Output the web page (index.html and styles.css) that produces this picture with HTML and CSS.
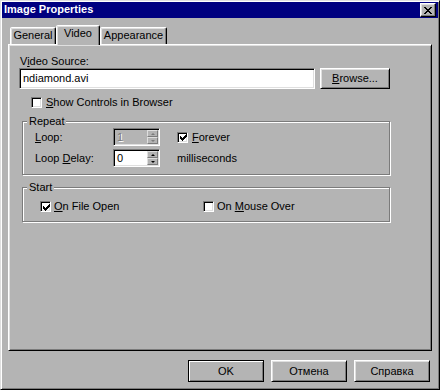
FILE: index.html
```html
<!DOCTYPE html>
<html>
<head>
<meta charset="utf-8">
<title>Image Properties</title>
<link rel="stylesheet" href="styles.css">
</head>
<body>
<div class="window">
  <div class="titlebar">
    <span class="title">Image Properties</span>
    <span class="close">
      <svg width="8" height="7" viewBox="0 0 8 7" shape-rendering="crispEdges">
        <rect x="0" y="0" width="2" height="1"/><rect x="6" y="0" width="2" height="1"/>
        <rect x="1" y="1" width="2" height="1"/><rect x="5" y="1" width="2" height="1"/>
        <rect x="2" y="2" width="4" height="1"/>
        <rect x="3" y="3" width="2" height="1"/>
        <rect x="2" y="4" width="4" height="1"/>
        <rect x="1" y="5" width="2" height="1"/><rect x="5" y="5" width="2" height="1"/>
        <rect x="0" y="6" width="2" height="1"/><rect x="6" y="6" width="2" height="1"/>
      </svg>
    </span>
  </div>

  <div class="tabs">
    <div class="tab tab-general">General</div>
    <div class="tab tab-video active">Video</div>
    <div class="tab tab-appear">Appearance</div>
  </div>

  <div class="panel">
    <div class="src-label">V<u>i</u>deo Source:</div>
    <div class="src-row">
      <div class="textbox">ndiamond.avi</div>
      <div class="btn browse"><u>B</u>rowse...</div>
    </div>
    <div class="check show-ctrl"><span class="box"></span><span class="ctext"><u>S</u>how Controls in Browser</span></div>

    <div class="group repeat">
      <div class="group-title">Repeat</div>
      <div class="grow first">
        <span class="glabel"><u>L</u>oop:</span>
        <div class="spin disabled">
          <span class="val">1</span>
          <span class="arrows"><span class="sbtn"><i class="up"></i></span><span class="sbtn"><i class="down"></i></span></span>
        </div>
        <div class="check after-spin">
          <span class="box">
            <svg width="7" height="7" viewBox="0 0 7 7" shape-rendering="crispEdges">
              <rect x="6" y="0" width="1" height="1"/>
              <rect x="5" y="1" width="2" height="1"/>
              <rect x="0" y="2" width="1" height="1"/><rect x="4" y="2" width="3" height="1"/>
              <rect x="0" y="3" width="2" height="1"/><rect x="3" y="3" width="3" height="1"/>
              <rect x="0" y="4" width="5" height="1"/>
              <rect x="1" y="5" width="3" height="1"/>
              <rect x="2" y="6" width="1" height="1"/>
            </svg>
          </span>
          <span class="ctext"><u>F</u>orever</span>
        </div>
      </div>
      <div class="grow second">
        <span class="glabel">Loop <u>D</u>elay:</span>
        <div class="spin">
          <span class="val">0</span>
          <span class="arrows"><span class="sbtn"><i class="up"></i></span><span class="sbtn"><i class="down"></i></span></span>
        </div>
        <span class="unit">milliseconds</span>
      </div>
    </div>

    <div class="group start">
      <div class="group-title">Start</div>
      <div class="start-row">
        <div class="check file-open">
          <span class="box">
            <svg width="7" height="7" viewBox="0 0 7 7" shape-rendering="crispEdges">
              <rect x="6" y="0" width="1" height="1"/>
              <rect x="5" y="1" width="2" height="1"/>
              <rect x="0" y="2" width="1" height="1"/><rect x="4" y="2" width="3" height="1"/>
              <rect x="0" y="3" width="2" height="1"/><rect x="3" y="3" width="3" height="1"/>
              <rect x="0" y="4" width="5" height="1"/>
              <rect x="1" y="5" width="3" height="1"/>
              <rect x="2" y="6" width="1" height="1"/>
            </svg>
          </span>
          <span class="ctext"><u>O</u>n File Open</span>
        </div>
        <div class="check"><span class="box"></span><span class="ctext">On <u>M</u>ouse Over</span></div>
      </div>
    </div>
  </div>

  <div class="buttons">
    <div class="btn default">OK</div>
    <div class="btn">Отмена</div>
    <div class="btn">Справка</div>
  </div>
</div>
</body>
</html>
```

FILE: styles.css
```css
html, body {
  margin: 0;
  padding: 0;
  background: #b4b4b4;
}

body {
  font-family: "Liberation Sans", Arial, sans-serif;
  font-size: 11px;
  line-height: 13px;
  color: #000;
}

u {
  text-decoration: underline;
  text-underline-offset: 1px;
}

.window {
  width: 440px;
  height: 390px;
  box-sizing: border-box;
  background: #b4b4b4;
  border: 1px solid;
  border-color: #dfdfdf #000 #000 #dfdfdf;
  box-shadow: inset 1px 1px #fff, inset -1px -1px #7b7b7b;
  padding: 1px;
  display: flex;
  flex-direction: column;
}

/* title bar */
.titlebar {
  height: 16px;
  background: #000080;
  display: flex;
  align-items: center;
  justify-content: space-between;
  padding: 0 2px 0 2px;
}

.title {
  color: #fff;
  font-weight: bold;
  font-size: 11px;
  line-height: 13px;
  margin-top: -1px;
}

.close {
  width: 16px;
  height: 14px;
  box-sizing: border-box;
  background: #b4b4b4;
  border: 1px solid;
  border-color: #fff #000 #000 #fff;
  box-shadow: inset -1px -1px #7b7b7b, inset 1px 1px #dfdfdf;
  display: flex;
  align-items: center;
  justify-content: center;
}

.close svg {
  display: block;
  fill: #000;
}

/* tabs */
.tabs {
  display: flex;
  align-items: flex-end;
  height: 20px;
  margin: 7px 0 0 6px;
  padding-left: 2px;
}

.tab {
  height: 17px;
  box-sizing: border-box;
  margin-bottom: 1px;
  border: 1px solid;
  border-bottom: 0;
  border-color: #fff #000 transparent #fff;
  border-radius: 2px 2px 0 0;
  box-shadow: inset -1px 0 #7b7b7b, inset 1px 1px #dfdfdf;
  background: #b4b4b4;
  padding-top: 1px;
  text-align: center;
}

.tab-general { width: 46px; }
.tab-video { width: 44px; }
.tab-appear { width: 67px; }

.tab.active {
  height: 20px;
  margin-bottom: 0;
  position: relative;
  z-index: 2;
  box-shadow: inset -1px 0 #7b7b7b, inset 1px 1px #dfdfdf;
}

/* panel */
.panel {
  margin: -1px 6px 0 6px;
  height: 307px;
  box-sizing: border-box;
  border: 1px solid;
  border-color: #fff #000 #000 #fff;
  box-shadow: inset 1px 1px #dfdfdf, inset -1px -1px #7b7b7b;
  padding-top: 10px;
  position: relative;
  z-index: 1;
}

.src-label {
  margin-left: 11px;
}

.src-row {
  display: flex;
  margin-left: 10px;
}

.textbox {
  width: 296px;
  height: 21px;
  box-sizing: border-box;
  background: #fff;
  border: 1px solid;
  border-color: #7b7b7b #fff #fff #7b7b7b;
  box-shadow: inset 1px 1px #000, inset -1px -1px #dfdfdf;
  padding: 3px 0 0 3px;
  white-space: nowrap;
  overflow: hidden;
}

.btn {
  height: 22px;
  width: 76px;
  box-sizing: border-box;
  background: #b4b4b4;
  border: 1px solid;
  border-color: #fff #000 #000 #fff;
  box-shadow: inset 1px 1px #dfdfdf, inset -1px -1px #7b7b7b;
  display: flex;
  align-items: center;
  justify-content: center;
}

.btn.browse {
  width: 70px;
  height: 21px;
  margin-left: 5px;
}

.btn.default {
  border-color: #000;
  box-shadow: inset 1px 1px #fff, inset -1px -1px #7b7b7b;
}

/* checkboxes */
.check {
  display: flex;
  align-items: center;
  height: 13px;
}

.box {
  width: 11px;
  height: 11px;
  box-sizing: border-box;
  flex: none;
  background: #fff;
  border: 1px solid;
  border-color: #7b7b7b #fff #fff #7b7b7b;
  box-shadow: inset 1px 1px #000, inset -1px -1px #dfdfdf;
  display: flex;
  align-items: center;
  justify-content: center;
  padding: 1px 0 0 1px;
}

.box svg {
  display: block;
  fill: #000;
}

.ctext {
  margin-left: 4px;
  white-space: nowrap;
}

.show-ctrl {
  margin: 7px 0 0 22px;
}

/* group boxes */
.group {
  margin-left: 13px;
  width: 368px;
  box-sizing: border-box;
  border: 1px solid #7b7b7b;
  box-shadow: inset 1px 1px #fff, 1px 1px #fff;
}

.group-title {
  width: fit-content;
  margin: -7px 0 0 4px;
  padding: 0 2px;
  background: #b4b4b4;
}

.repeat {
  margin-top: 12px;
  padding-bottom: 7px;
}

.grow {
  display: flex;
  align-items: center;
  height: 18px;
  padding-left: 12px;
}

.grow.second {
  margin-top: 3px;
}

.glabel {
  width: 78px;
}

.spin {
  width: 47px;
  height: 18px;
  box-sizing: border-box;
  background: #fff;
  border: 1px solid;
  border-color: #7b7b7b #fff #fff #7b7b7b;
  box-shadow: inset 1px 1px #000, inset -1px -1px #dfdfdf;
  padding: 1px;
  display: flex;
}

.spin .val {
  flex: 1;
  padding-left: 2px;
  line-height: 14px;
}

.spin.disabled {
  background: #b4b4b4;
}

.spin.disabled .val {
  color: #7b7b7b;
  text-shadow: 1px 1px #fff;
}

.arrows {
  width: 11px;
  display: flex;
  flex-direction: column;
}

.sbtn {
  height: 7px;
  box-sizing: border-box;
  background: #b4b4b4;
  border: 1px solid;
  border-color: #dfdfdf #7b7b7b #7b7b7b #dfdfdf;
  display: flex;
  align-items: center;
  justify-content: center;
}

.sbtn i {
  width: 0;
  height: 0;
  border-left: 2px solid transparent;
  border-right: 2px solid transparent;
}

.sbtn i.up {
  border-bottom: 2px solid #000;
}

.sbtn i.down {
  border-top: 2px solid #000;
}

.spin.disabled .sbtn i.up {
  border-bottom-color: #7b7b7b;
}

.spin.disabled .sbtn i.down {
  border-top-color: #7b7b7b;
}

.after-spin {
  margin-left: 17px;
}

.unit {
  margin-left: 17px;
}

.start {
  margin-top: 12px;
  padding-bottom: 8px;
}

.start-row {
  display: flex;
  margin: 6px 0 0 17px;
}

.file-open {
  width: 163px;
}

.file-open .ctext,
.start-row .ctext {
  margin-left: 3px;
}

/* bottom buttons */
.buttons {
  display: flex;
  justify-content: flex-end;
  gap: 7px;
  margin: 9px 8px 0 0;
}
```
